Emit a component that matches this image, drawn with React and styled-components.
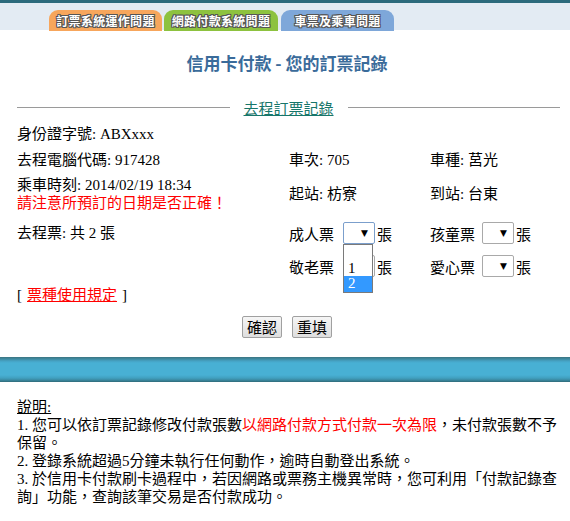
import React from "react";
import styled, { createGlobalStyle } from "styled-components";

const Global = createGlobalStyle`
  html, body { margin: 0; padding: 0; background: #fff; }
  body {
    font-family: "Liberation Serif", "Noto Sans CJK TC", serif;
    font-size: 15px;
    color: #000;
  }
`;

const Page = styled.div`
  width: 570px;
  min-height: 521px;
  background: #fff;
`;

const TopBar = styled.div`
  border-top: 3px solid #2c6a7c;
  background: #e3ebf3;
  height: 30px;
  display: flex;
  align-items: flex-start;
  padding: 7px 0 0 49px;
  box-sizing: border-box;
  gap: 2px;
`;

const Tab = styled.div`
  width: ${(p) => p.$w}px;
  height: 21px;
  margin-right: ${(p) => p.$mr || 0}px;
  border-radius: 9px 9px 0 0;
  background: ${(p) => p.$bg};
  display: flex;
  align-items: center;
  justify-content: center;
  font-family: "Noto Sans CJK TC", sans-serif;
  font-size: 12px;
  font-weight: 700;
  color: #fff;
  letter-spacing: 0.3px;
  text-shadow: 1px 0 0 #555, -1px 0 0 #555, 0 1px 0 #555, 0 -1px 0 #555,
    1px 1px 0 #555, -1px -1px 0 #555, 1px -1px 0 #555, -1px 1px 0 #555;
`;

const Title = styled.h1`
  margin: 0;
  height: 64px;
  display: flex;
  align-items: center;
  justify-content: center;
  padding: 0 0 0 4px;
  font-family: "Noto Sans CJK TC", sans-serif;
  font-size: 17px;
  font-weight: 700;
  color: #3a6b9a;
`;

const Divider = styled.div`
  height: 26px;
  display: flex;
  align-items: center;
  padding: 0 10px 0 17px;
  gap: 14px;
  &::before, &::after {
    content: "";
    flex: 1;
    height: 1px;
    background: #9a9a9a;
  }
`;

const SectionLink = styled.a`
  color: #17766a;
  text-decoration: underline;
  font-size: 15px;
  font-family: "Noto Sans CJK TC", sans-serif;
`;

const Grid = styled.div`
  display: grid;
  grid-template-columns: 272px 141px 1fr;
  grid-template-rows: 26px 26px 42px 36px 30px 28px;
  padding-left: 17px;
  margin-top: 1px;
`;

const Cell = styled.div`
  display: flex;
  flex-direction: column;
  justify-content: center;
  align-items: flex-start;
  line-height: 18px;
  white-space: nowrap;
  grid-column: ${(p) => p.$col || "auto"};
`;

const InlineCell = styled.div`
  display: flex;
  align-items: center;
  white-space: nowrap;
`;

const Warn = styled.span`
  color: #ff0000;
`;

const SelectWrap = styled.div`
  position: relative;
  margin: 0 2px 0 ${(p) => p.$ml || 9}px;
`;

const SelectBox = styled.div`
  width: 32px;
  height: 22px;
  box-sizing: border-box;
  border: 1px solid ${(p) => (p.$focus ? "#7b9fcc" : "#a9a9a9")};
  border-radius: 2px;
  background: #fff;
  display: flex;
  align-items: center;
  justify-content: flex-end;
  padding-right: 6px;
  font-family: "DejaVu Sans", sans-serif;
  font-size: 9px;
  color: #000;
`;

const DropList = styled.div`
  position: absolute;
  top: 22px;
  left: 0;
  width: 30px;
  box-sizing: border-box;
  border: 1px solid #7a7a7a;
  background: #fff;
  z-index: 5;
`;

const Option = styled.div`
  height: 15.5px;
  line-height: 15px;
  padding-left: 4px;
  font-size: 15px;
  background: ${(p) => (p.$sel ? "#3399ff" : "#fff")};
  color: ${(p) => (p.$sel ? "#fff" : "#000")};
`;

const RuleLink = styled.a`
  color: #ff0000;
  text-decoration: underline;
  margin: 0 5px;
`;

const Buttons = styled.div`
  display: flex;
  justify-content: center;
  gap: 10px;
  padding: 7px 0 0 0;
  margin-left: 4px;
`;

const Button = styled.button`
  width: 40px;
  height: 22px;
  padding: 0;
  border: 1px solid #a0a0a0;
  border-radius: 2px;
  background: linear-gradient(#f6f6f6, #dedede);
  font-family: "Noto Sans CJK TC", sans-serif;
  font-size: 15px;
  line-height: 20px;
  color: #000;
`;

const BlueBar = styled.div`
  margin-top: 19px;
  height: 25px;
  background: linear-gradient(
    #3b7482 0px,
    #3f8aa0 2px,
    #45a2c4 4px,
    #48b0d4 6px,
    #48b0d4 18px,
    #41a0c0 21px,
    #3a8aa2 23px,
    #2f6a78 25px
  );
`;

const Notes = styled.div`
  padding: 16px 8px 0 17px;
  width: 545px;
  line-height: 18px;
  font-size: 15px;
`;

const NotesHead = styled.div`
  text-decoration: underline;
`;

const Select = ({ focus, open, ml }) => (
  <SelectWrap $ml={ml}>
    <SelectBox $focus={focus}>▼</SelectBox>
    {open && (
      <DropList>
        <Option>&nbsp;</Option>
        <Option>1</Option>
        <Option $sel>2</Option>
      </DropList>
    )}
  </SelectWrap>
);

export default function App() {
  return (
    <Page>
      <Global />
      <TopBar>
        <Tab $w={113} $bg="#f7a65c">訂票系統運作問題</Tab>
        <Tab $w={114} $bg="#8dc23f" $mr={1}>網路付款系統問題</Tab>
        <Tab $w={113} $bg="#7ea7d9">車票及乘車問題</Tab>
      </TopBar>
      <Title>信用卡付款 - 您的訂票記錄</Title>
      <Divider>
        <SectionLink>去程訂票記錄</SectionLink>
      </Divider>
      <Grid>
        <Cell $col="1 / 4">身份證字號: ABXxxx</Cell>

        <Cell>去程電腦代碼: 917428</Cell>
        <Cell>車次: 705</Cell>
        <Cell>車種: 莒光</Cell>

        <Cell>
          <span>乘車時刻: 2014/02/19 18:34</span>
          <Warn>請注意所預訂的日期是否正確！</Warn>
        </Cell>
        <Cell>起站: 枋寮</Cell>
        <Cell>到站: 台東</Cell>

        <Cell>去程票: 共 2 張</Cell>
        <InlineCell>
          成人票<Select focus open />張
        </InlineCell>
        <InlineCell>
          孩童票<Select ml={7} />張
        </InlineCell>

        <Cell />
        <InlineCell>
          敬老票<Select />張
        </InlineCell>
        <InlineCell>
          愛心票<Select ml={7} />張
        </InlineCell>

        <Cell $col="1 / 4">
          <span>
            [<RuleLink>票種使用規定</RuleLink>]
          </span>
        </Cell>
      </Grid>
      <Buttons>
        <Button>確認</Button>
        <Button>重填</Button>
      </Buttons>
      <BlueBar />
      <Notes>
        <NotesHead>說明:</NotesHead>
        <div>
          1. 您可以依訂票記錄修改付款張數<Warn>以網路付款方式付款一次為限</Warn>，未付款張數不予保留。
        </div>
        <div>2. 登錄系統超過5分鐘未執行任何動作，逾時自動登出系統。</div>
        <div>
          3. 於信用卡付款刷卡過程中，若因網路或票務主機異常時，您可利用「付款記錄查詢」功能，查詢該筆交易是否付款成功。
        </div>
      </Notes>
    </Page>
  );
}
